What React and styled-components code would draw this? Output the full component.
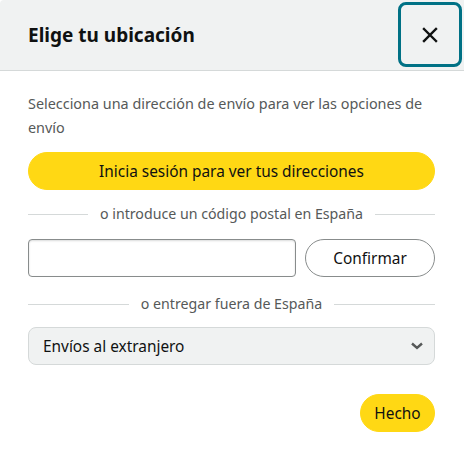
import React from "react"
import styled, { createGlobalStyle } from "styled-components"

const Global = createGlobalStyle`
  html, body {
    margin: 0;
    padding: 0;
    background: #fff;
  }
  body {
    font-family: "Noto Sans", "Liberation Sans", sans-serif;
    color: #0f1111;
  }
`

const Modal = styled.div`
  width: 464px;
  height: 457px;
  background: #fff;
  border-top-left-radius: 4px;
  overflow: hidden;
`

const Header = styled.header`
  display: flex;
  align-items: center;
  justify-content: space-between;
  height: 71px;
  padding: 0 2px 0 28px;
  background: #f0f2f2;
  border-bottom: 1px solid #d5d9d9;
  box-sizing: border-box;
`

const Title = styled.h1`
  margin: 0;
  font-size: 19px;
  font-weight: 700;
  color: #0f1111;
`

const CloseButton = styled.button`
  width: 64px;
  height: 65px;
  margin-top: -1px;
  display: flex;
  align-items: center;
  justify-content: center;
  background: transparent;
  border: 3px solid #007185;
  border-radius: 8px;
  padding: 0;
  cursor: pointer;
`

const Body = styled.div`
  display: flex;
  flex-direction: column;
  padding: 21px 29px 0 28px;
`

const Intro = styled.p`
  margin: 0;
  font-size: 14.4px;
  line-height: 24px;
  color: #565959;
`

const PillButton = styled.button`
  height: 38px;
  border-radius: 19px;
  font-family: inherit;
  font-size: 15.4px;
  color: #0f1111;
  cursor: pointer;
  padding: 0 14px;
  background: ${(p) => (p.$outline ? "#fff" : "#ffd814")};
  border: ${(p) => (p.$outline ? "1px solid #888c8c" : "1px solid #ffd814")};
`

const SignIn = styled(PillButton)`
  margin-top: 12px;
  width: 100%;
`

const Divider = styled.div`
  display: flex;
  align-items: center;
  gap: 12px;
  margin-top: ${(p) => p.$top}px;
  font-size: 14.2px;
  line-height: 20px;
  color: #565959;

  &::before,
  &::after {
    content: "";
    flex: 1;
    height: 1px;
    background: #d5d9d9;
  }
`

const ZipRow = styled.div`
  display: flex;
  gap: 9px;
  margin-top: 15px;
`

const ZipInput = styled.input`
  flex: 1;
  height: 38px;
  box-sizing: border-box;
  border: 1px solid #888c8c;
  border-radius: 4px;
  box-shadow: inset 0 1px 2px rgba(15, 17, 17, 0.15);
  font-family: inherit;
  font-size: 15px;
  padding: 0 10px;
`

const Confirm = styled(PillButton)`
  width: 130px;
`

const Select = styled.div`
  display: flex;
  align-items: center;
  justify-content: space-between;
  height: 38px;
  box-sizing: border-box;
  margin-top: 13px;
  padding: 0 10px 0 14px;
  background: #f0f2f2;
  border: 1px solid #d5d9d9;
  border-radius: 8px;
  font-size: 15.4px;
  color: #0f1111;
`

const Footer = styled.div`
  display: flex;
  justify-content: flex-end;
  margin-top: 29px;
`

const Done = styled(PillButton)`
  width: 75px;
  padding: 0;
`

export default function App() {
  return (
    <>
      <Global />
      <Modal>
        <Header>
          <Title>Elige tu ubicación</Title>
          <CloseButton aria-label="Cerrar">
            <svg width="16" height="16" viewBox="0 0 16 16">
              <path d="M2 2L14 14M14 2L2 14" stroke="#0f1111" strokeWidth="2.4" strokeLinecap="square" />
            </svg>
          </CloseButton>
        </Header>
        <Body>
          <Intro>Selecciona una dirección de envío para ver las opciones de envío</Intro>
          <SignIn>Inicia sesión para ver tus direcciones</SignIn>
          <Divider $top={14}>o introduce un código postal en España</Divider>
          <ZipRow>
            <ZipInput type="text" />
            <Confirm $outline>Confirmar</Confirm>
          </ZipRow>
          <Divider $top={17}>o entregar fuera de España</Divider>
          <Select>
            <span>Envíos al extranjero</span>
            <svg width="14" height="10" viewBox="0 0 14 10">
              <path d="M2 2.5L7 7L12 2.5" fill="none" stroke="#565959" strokeWidth="2.4" />
            </svg>
          </Select>
          <Footer>
            <Done>Hecho</Done>
          </Footer>
        </Body>
      </Modal>
    </>
  )
}
